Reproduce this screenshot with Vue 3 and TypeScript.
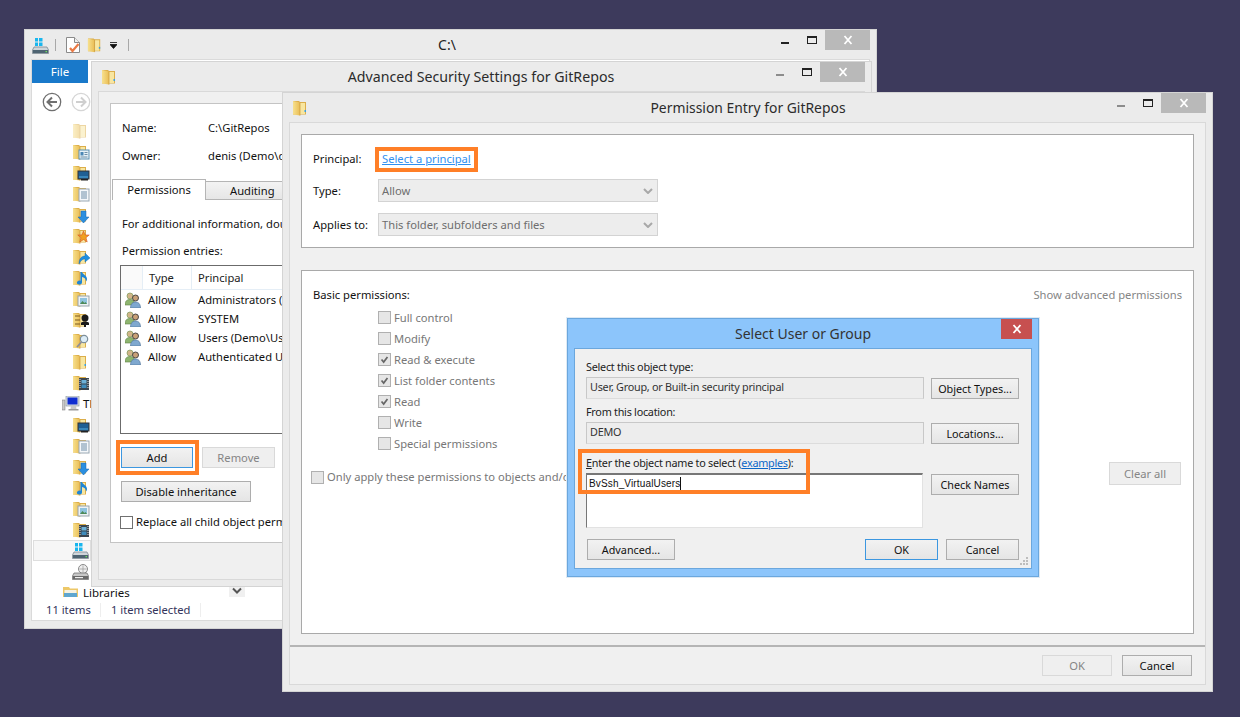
<script setup lang="ts">
const treeRows: { kind: string; label?: string; wide?: boolean; sel?: boolean }[] = [
  { kind: 'folder-pale' }, { kind: 'ov-card' }, { kind: 'ov-desktop' }, { kind: 'ov-doc' }, { kind: 'ov-down' },
  { kind: 'ov-star' }, { kind: 'ov-link' }, { kind: 'ov-music' }, { kind: 'ov-pic' }, { kind: 'ov-black' },
  { kind: 'ov-mag' }, { kind: 'ov-none' }, { kind: 'ov-film' },
  { kind: 'pc', label: 'This PC', wide: true },
  { kind: 'ov-desktop' }, { kind: 'ov-doc' }, { kind: 'ov-down' }, { kind: 'ov-music' }, { kind: 'ov-pic' }, { kind: 'ov-film' },
  { kind: 'drive', sel: true }, { kind: 'disk' },
  { kind: 'lib', label: 'Libraries', wide: true },
]
const entries = [
  ['Allow', 'Administrators (Demo\\Administrators)'],
  ['Allow', 'SYSTEM'],
  ['Allow', 'Users (Demo\\Users)'],
  ['Allow', 'Authenticated Users'],
]
const perms = [
  { t: 'Full control', c: false }, { t: 'Modify', c: false }, { t: 'Read & execute', c: true },
  { t: 'List folder contents', c: true }, { t: 'Read', c: true }, { t: 'Write', c: false }, { t: 'Special permissions', c: false },
]
</script>

<template>
  <div class="desk">
    <svg class="defs" width="0" height="0" aria-hidden="true">
      <defs>
        <linearGradient id="fg" x1="0" y1="0" x2="1" y2="0"><stop offset="0" stop-color="#f7e08e"/><stop offset="1" stop-color="#e9bd55"/></linearGradient>
        <symbol id="folder" viewBox="0 0 18 16">
          <path d="M1 1h6l1 1h6v12.5H1z" fill="#dcae4a"/>
          <path d="M8 3h5v11H8z" fill="#f8e6a0"/>
          <path d="M1 1l7 1.6V15.6L1 14.4z" fill="url(#fg)"/>
          <path d="M8 2.6V15.6" stroke="#c8973a" stroke-width=".7"/>
        </symbol>
        <symbol id="ov-none" viewBox="0 0 18 16"><rect x="12.5" y="10" width="1.5" height="2" fill="#3aa0e0"/></symbol>
        <symbol id="ov-card" viewBox="0 0 18 16"><rect x="7" y="6" width="10" height="9" fill="#e6f1f7" stroke="#5a8fb0"/><rect x="8.5" y="8" width="3" height="3.5" fill="#4a87b5"/><path d="M12.5 8.5h3M12.5 10.5h3M8.5 13h7" stroke="#6d8ea6"/></symbol>
        <symbol id="ov-desktop" viewBox="0 0 18 16"><rect x="6" y="6" width="11" height="8" fill="#1f5f94" stroke="#333"/><path d="M7 12h9" stroke="#55aee0"/><rect x="9" y="14" width="7" height="1.5" fill="#222"/></symbol>
        <symbol id="ov-doc" viewBox="0 0 18 16"><rect x="7" y="3" width="10" height="12" fill="#f4f7fa" stroke="#9aa8b4"/><path d="M9 6h6M9 8h6M9 10h6M9 12h6" stroke="#6f8ea8"/></symbol>
        <symbol id="ov-down" viewBox="0 0 18 16"><path d="M9 4h5v6h3l-5.500 6L6 10h3z" fill="#2b8fe0" stroke="#1a66ad" stroke-width=".5"/></symbol>
        <symbol id="ov-star" viewBox="0 0 18 16"><path d="M11.500 3l1.700 4h4l-3.200 2.700 1.200 4.300-3.700-2.500L7.800 14 9 9.700 5.800 7h4z" fill="#f0a020" stroke="#d4532a" stroke-width=".6"/></symbol>
        <symbol id="ov-link" viewBox="0 0 18 16"><path d="M7 15c0-6 3-8 6-8V4l5 5-5 4v-3c-2 0-4 1-6 5z" fill="#1f8fe0" stroke="#1566aa" stroke-width=".4"/></symbol>
        <symbol id="ov-music" viewBox="0 0 18 16"><path d="M10 2v10.500a2.500 2 0 1 1-1.500-1.800V2zM10 2c1 3 5 3 5 7 0 1-.5 2-1 2.500 0-3-2-4-4-4.500z" fill="#1f86d6"/></symbol>
        <symbol id="ov-pic" viewBox="0 0 18 16"><rect x="6" y="5" width="11" height="10" fill="#eef2f4" stroke="#98a4ac"/><rect x="8" y="7" width="7" height="6" fill="#8fc3de"/><path d="M8 13l2.500-3 2 2 1-1 1.500 2z" fill="#4d8a58"/></symbol>
        <symbol id="ov-black" viewBox="0 0 18 16"><circle cx="13" cy="6" r="3.500" fill="#1a1a1a"/><path d="M9 11c1-2 7-2 8 0v2h-3v2h-2v-2H9z" fill="#1a1a1a"/><path d="M3 4h5M3 8h5M3 12h5" stroke="#7b5a20"/></symbol>
        <symbol id="ov-mag" viewBox="0 0 18 16"><circle cx="12" cy="6" r="3.700" fill="#dcecf6" stroke="#7d8f9c" stroke-width="1.200"/><path d="M9.500 9L5 14" stroke="#8d8d99" stroke-width="1.800"/></symbol>
        <symbol id="ov-film" viewBox="0 0 18 16"><rect x="7" y="3" width="10" height="12" fill="#3b4650"/><rect x="9.500" y="5" width="5" height="3.500" fill="#6cb1d8"/><rect x="9.500" y="9.500" width="5" height="3.500" fill="#3e8cbc"/><path d="M8 4v10M16 4v10" stroke="#ddd" stroke-dasharray="1 1"/></symbol>
        <symbol id="drive" viewBox="0 0 18 16">
          <path d="M3 0h3v3.500H3zM7 0h3.500v3.500H7zM3 4.500h3V8H3zM7 4.500h3.500V8H7z" fill="#19b6ee"/>
          <path d="M2 9h13l1.500 3v3.500H.5V12z" fill="#cfd6da" stroke="#6f7d86" stroke-width=".7"/>
          <rect x="1" y="12" width="15" height="3" fill="#4e6472"/><rect x="13.500" y="13" width="1.500" height="1.200" fill="#6fe05a"/>
        </symbol>
        <symbol id="disk" viewBox="0 0 18 16">
          <circle cx="11" cy="5" r="4.500" fill="#eee" stroke="#8a8a8a"/><path d="M11 1.500V8.500M7.500 5h7" stroke="#9a9a9a" stroke-width=".7"/>
          <path d="M2 9h13l1.500 3v3.500H.5V12z" fill="#c8c8c8" stroke="#666" stroke-width=".7"/>
          <rect x="1" y="12" width="15" height="3" fill="#6a6a6a"/><rect x="3" y="13" width="8" height="1.200" fill="#eee"/>
        </symbol>
        <symbol id="pc" viewBox="0 0 18 16">
          <rect x="0" y="4" width="3" height="10" fill="#c9c9c9" stroke="#777" stroke-width=".5"/>
          <rect x="4" y="0" width="13" height="10" fill="#dde0e2" stroke="#7c8a94" stroke-width=".6"/>
          <rect x="5.500" y="1.500" width="10" height="7" fill="#0f2dd0"/>
          <path d="M9 10h5l.5 3H8.500z" fill="#c8c8c8"/><rect x="6.500" y="13" width="10" height="1.500" fill="#9a9a9a"/>
        </symbol>
        <symbol id="lib" viewBox="0 0 18 16">
          <path d="M1 2h6l1 1.500h8V15H1z" fill="#edc868"/><rect x="2.500" y="5" width="12" height="4" fill="#f6f2e2"/><rect x="2" y="8" width="13" height="7" fill="#5fa6cf"/>
        </symbol>
        <symbol id="users" viewBox="0 0 16 16">
          <circle cx="5" cy="4" r="3" fill="#d2b58a" stroke="#7c9a58" stroke-width=".7"/>
          <path d="M0 13c0-4 2-5.500 5-5.500S10 9 10 13z" fill="#8eb56f" stroke="#5f8245" stroke-width=".6"/>
          <circle cx="10.500" cy="6" r="3" fill="#c9a077" stroke="#3b3b3b" stroke-width=".9"/>
          <path d="M5.500 16c0-4 2-6 5-6s5 2 5 6z" fill="#7fa8cf" stroke="#4c6f95" stroke-width=".6"/>
        </symbol>
        <symbol id="x" viewBox="0 0 12 10"><path d="M2.500 1l7 8M9.500 1l-7 8" stroke="#fff" stroke-width="1.800"/></symbol>
      </defs>
    </svg>

    <!-- Explorer window -->
    <section class="win win-explorer">
      <header class="titlebar">
        <div class="qat">
          <svg class="ic16" viewBox="0 0 18 16"><use href="#drive"/></svg>
          <i class="qsep"></i>
          <svg class="qdoc" viewBox="0 0 14 16"><path d="M.5.5h8l5 5v10H.5z" fill="#fff" stroke="#8a8a8a"/><path d="M8.500.5v5h5" fill="#eee" stroke="#8a8a8a"/><path d="M4 11l2.500 3 6-7" fill="none" stroke="#ea7a45" stroke-width="2.200"/></svg>
          <svg class="qfolder" viewBox="0 0 18 16"><use href="#folder"/><use href="#ov-none"/></svg>
          <svg class="qdrop" viewBox="0 0 7 7"><path d="M0 .5h7M0 2.500h7l-3.500 4z" stroke="#111" fill="#111" stroke-width=".8"/></svg>
          <i class="qsep qsep2"></i>
        </div>
        <div class="title title-ex">C:\</div>
        <div class="controls"><i class="min dark"></i><i class="max"></i><b class="close"><svg viewBox="0 0 12 10"><use href="#x"/></svg></b></div>
      </header>
      <div class="ex-body">
        <div class="ribbon"><span class="file">File</span></div>
        <div class="navrow">
          <svg class="navbtn" viewBox="0 0 20 20"><circle cx="10" cy="10" r="8.700" fill="#fff" stroke="#6f6f6f" stroke-width="1.300"/><path d="M15 10H6M10 5.500L5.500 10l4.500 4.500" fill="none" stroke="#6f6f6f" stroke-width="2"/></svg>
          <svg class="navbtn fwd" viewBox="0 0 20 20"><circle cx="10" cy="10" r="8.700" fill="#fff" stroke="#d5d5d5" stroke-width="1.300"/><path d="M5 10h9M10 5.500l4.500 4.500-4.500 4.500" fill="none" stroke="#cfcfcf" stroke-width="2"/></svg>
        </div>
        <div class="tree">
          <div v-for="(r, i) in treeRows" :key="i" class="tree-row" :class="{ wide: r.wide, sel: r.sel }">
            <svg class="ic-tree" :class="{ pale: r.kind === 'folder-pale' }" viewBox="0 0 18 16">
              <use v-if="r.kind.startsWith('ov-') || r.kind === 'folder-pale'" href="#folder"/>
              <use v-if="r.kind.startsWith('ov-')" :href="'#' + r.kind"/>
              <use v-else-if="r.kind !== 'folder-pale'" :href="'#' + r.kind"/>
            </svg>
            <span v-if="r.label" class="tree-label">{{ r.label }}</span>
          </div>
          <svg class="tree-chev" viewBox="0 0 16 12"><path d="M4 2.500l4 4 4-4" fill="none" stroke="#555" stroke-width="2"/></svg>
        </div>
        <footer class="status"><span class="st-a">11 items</span><span class="st-b">1 item selected</span></footer>
      </div>
    </section>

    <!-- Advanced Security Settings -->
    <section class="win win-adv">
      <header class="titlebar">
        <svg class="ic-title" viewBox="0 0 18 16"><use href="#folder"/><use href="#ov-none"/></svg>
        <div class="title title-adv">Advanced Security Settings for GitRepos</div>
        <div class="controls"><i class="min"></i><i class="max"></i><b class="close"><svg viewBox="0 0 12 10"><use href="#x"/></svg></b></div>
      </header>
      <div class="frame adv-frame">
        <div class="adv-panel">
          <div class="kv"><span>Name:</span><span>C:\GitRepos</span></div>
          <div class="kv"><span>Owner:</span><span>denis (Demo\denis)</span></div>
          <div class="tabs"><span class="tab active">Permissions</span><span class="tab">Auditing</span></div>
          <div class="tab-body">
            <p class="info">For additional information, double-click a permission entry.</p>
            <p class="info entries-label">Permission entries:</p>
            <div class="list">
              <div class="list-head"><span class="lh-i"></span><span class="lh-t">Type</span><span class="lh-p">Principal</span></div>
              <div v-for="e in entries" :key="e[1]" class="list-row">
                <svg class="ic-user" viewBox="0 0 16 16"><use href="#users"/></svg>
                <span class="lr-t">{{ e[0] }}</span><span>{{ e[1] }}</span>
              </div>
            </div>
            <div class="add-row">
              <span class="hl-add"><button class="btn primary b-add">Add</button></span>
              <button class="btn off b-rem">Remove</button>
            </div>
            <button class="btn b-dis">Disable inheritance</button>
            <label class="replace"><i class="cb cb-live"></i>Replace all child object permission entries</label>
          </div>
        </div>
      </div>
    </section>

    <!-- Permission Entry -->
    <section class="win win-perm">
      <header class="titlebar">
        <svg class="ic-title" viewBox="0 0 18 16"><use href="#folder"/><use href="#ov-none"/></svg>
        <div class="title title-perm">Permission Entry for GitRepos</div>
        <div class="controls"><i class="min"></i><i class="max"></i><b class="close"><svg viewBox="0 0 12 10"><use href="#x"/></svg></b></div>
      </header>
      <div class="frame perm-frame">
        <div class="box box-top">
          <span class="b-lab up">Principal:</span>
          <span class="hl-link"><a class="plink">Select a principal</a></span>
          <span class="b-lab">Type:</span>
          <div class="fake-select"><span>Allow</span><svg viewBox="0 0 10 6"><path d="M1 1l4 4 4-4" fill="none" stroke="#a8a8a8" stroke-width="2"/></svg></div>
          <span class="b-lab low">Applies to:</span>
          <div class="fake-select low"><span>This folder, subfolders and files</span><svg viewBox="0 0 10 6"><path d="M1 1l4 4 4-4" fill="none" stroke="#a8a8a8" stroke-width="2"/></svg></div>
        </div>
        <div class="box box-main">
          <div class="main-head"><span>Basic permissions:</span><span class="show-adv">Show advanced permissions</span></div>
          <div class="perm-list">
            <div v-for="p in perms" :key="p.t" class="perm-row">
              <i class="cb"><svg v-if="p.c" viewBox="0 0 13 13"><path d="M3 6.500l2.500 3L10 3.500" fill="none" stroke="#666" stroke-width="2"/></svg></i>
              <span>{{ p.t }}</span>
            </div>
          </div>
          <div class="only-row">
            <div class="only"><i class="cb"></i><span>Only apply these permissions to objects and/or containers within this container</span></div>
            <button class="btn off b-clear">Clear all</button>
          </div>
        </div>
        <footer class="perm-foot">
          <button class="btn off b-foot">OK</button>
          <button class="btn b-foot">Cancel</button>
        </footer>
      </div>
    </section>

    <!-- Select User or Group -->
    <section class="win dlg">
      <header class="dlg-title">
        <span>Select User or Group</span>
        <b class="dlg-close"><svg viewBox="0 0 12 10"><use href="#x"/></svg></b>
      </header>
      <div class="dlg-body">
        <div class="dlg-line first">Select this object type:</div>
        <div class="dlg-pair gap3"><div class="field">User, Group, or Built-in security principal</div><button class="btn dbtn">Object Types...</button></div>
        <div class="dlg-line">From this location:</div>
        <div class="dlg-pair gap3"><div class="field">DEMO</div><button class="btn dbtn">Locations...</button></div>
        <div class="dlg-line third"><u>E</u>nter the object name to select (<a class="ex">examples</a>):</div>
        <div class="dlg-pair gap3 tall"><div class="area"><span class="typed">BvSsh_VirtualUsers</span><i class="caret"></i></div><button class="btn dbtn">Check Names</button></div>
        <div class="dlg-foot">
          <button class="btn dbtn">Advanced...</button>
          <div class="dlg-foot-r"><button class="btn dbtn primary d-ok">OK</button><button class="btn dbtn d-ok">Cancel</button></div>
        </div>
        <svg class="grip" viewBox="0 0 9 9"><path d="M6 0h2v2H6zM3 3h2v2H3zM6 3h2v2H6zM0 6h2v2H0zM3 6h2v2H3zM6 6h2v2H6z" fill="#bdbdbd"/></svg>
      </div>
      <div class="hl-enter"></div>
    </section>
  </div>
</template>

<style>
html, body { margin: 0; padding: 0; background: #3d3a5c; }
</style>

<style scoped>
.desk { position: relative; width: 1240px; height: 717px; overflow: hidden; background: #3d3a5c; font: 11.2px/18px "Noto Sans", "Open Sans", sans-serif; color: #111; }
.defs { position: absolute; }
.win { position: absolute; box-sizing: border-box; display: flex; flex-direction: column; background: #ebebeb; border: 1px solid #d4d4d4; }
.win-explorer { left: 24px; top: 29px; width: 853px; height: 600px; }
.win-adv { left: 91px; top: 61px; width: 781px; height: 526px; }
.win-perm { left: 282px; top: 92px; width: 931px; height: 600px; }
.dlg { left: 567px; top: 318px; width: 472px; height: 259px; background: #8cc5fb; border-color: #6ba7dd; box-shadow: 0 0 0 1px #dfeaf4; }

.titlebar { flex: none; height: 29px; display: grid; grid-template-columns: 1fr auto 1fr; align-items: start; padding: 0 6px 0 9px; box-sizing: content-box; }
.title { font-size: 14px; line-height: 30px; color: #2b2b2b; white-space: nowrap; }
.title-adv { font-size: 14.2px; margin-right: 4px; }
.title-perm { font-size: 13.9px; margin-right: 2px; }
.title-ex { color: #222; margin-right: 10px; }
.ic-title { width: 18px; height: 16px; margin-top: 7px; }
.controls { justify-self: end; display: flex; align-items: flex-start; }
.min { width: 8px; height: 2px; margin: 12px 18px 0 0; background: #8c8c8c; }
.min.dark { background: #222; }
.max { box-sizing: border-box; width: 10px; height: 8px; margin: 6px 8px 0 0; border: 1px solid #222; border-top-width: 2px; }
.close { width: 45px; height: 20px; background: #b9b9b9; display: flex; align-items: center; justify-content: center; }
.close svg { width: 12px; height: 10px; }

.qat { display: flex; align-items: center; height: 30px; margin-left: -2px; }
.ic16 { width: 18px; height: 16px; margin-top: 1px; }
.qsep { width: 1px; height: 12px; background: #a8a8a8; margin: 0 10px 0 5px; }
.qsep2 { margin: 0 0 0 11px; }
.qdoc { width: 14px; height: 16px; }
.qfolder { width: 17px; height: 16px; margin-left: 7px; }
.qdrop { width: 7px; height: 7px; margin-left: 6px; }

.ex-body { flex: 1; min-height: 0; margin: 0 6px 7px 6px; background: #fff; border: 1px solid #dadada; display: flex; flex-direction: column; }
.ribbon { flex: none; height: 23px; }
.file { display: block; width: 56px; height: 23px; line-height: 23px; text-align: center; background: #1979ca; color: #fff; font-size: 11.5px; }
.navrow { flex: none; height: 37px; display: flex; align-items: center; gap: 9px; padding-left: 10px; box-sizing: border-box; }
.navbtn { width: 20px; height: 20px; }
.tree { flex: 1; min-height: 0; overflow: hidden; position: relative; }
.tree-row { height: 21px; display: flex; align-items: center; padding-left: 40px; box-sizing: border-box; width: 100%; }
.tree-row.wide { padding-left: 30px; }
.tree-row.sel { margin-left: 1px; width: 58px; padding-left: 39px; background: #f6f6f6; outline: 1px solid #dedede; outline-offset: -1px; }
.ic-tree { width: 18px; height: 16px; flex: none; }
.ic-tree.pale { opacity: .5; }
.tree-label { margin-left: 3px; font-size: 11.5px; padding-top: 1px; }
.tree-chev { position: absolute; left: 197px; top: 466px; width: 16px; height: 12px; background: #f0f0f0; }
.status { flex: none; height: 23px; display: flex; align-items: center; color: #33335a; padding-top: 3px; box-sizing: border-box; }
.st-a { width: 69px; padding-left: 14px; box-sizing: border-box; border-right: 1px solid #eee; line-height: 14px; }
.st-b { width: 100px; padding-left: 10px; box-sizing: border-box; border-right: 1px solid #eee; line-height: 14px; white-space: nowrap; }

.frame { flex: 1; min-height: 0; margin: 0 6px 6px 6px; background: #f0f0f0; border: 1px solid #d9d9d9; box-sizing: border-box; }
.adv-frame { padding: 11px 11px 37px; }
.adv-panel { box-sizing: border-box; height: 440px; background: #fff; border: 1px solid #c4c4c4; padding: 10px 11px 0; }
.kv { display: grid; grid-template-columns: 86px 1fr; height: 28px; align-items: center; white-space: nowrap; }
.tabs { margin: 9px 0 0 -10px; display: flex; align-items: flex-end; height: 21px; }
.tab { box-sizing: border-box; height: 19px; line-height: 18px; border: 1px solid #b5b5b5; border-left: 0; background: linear-gradient(#f3f3f3, #e6e6e6); padding: 0 24px; }
.tab.active { height: 21px; width: 94px; padding: 0; text-align: center; background: #fff; border: 1px solid #b5b5b5; border-bottom: 0; line-height: 20px; }
.tab-body { display: flex; flex-direction: column; align-items: flex-start; }
.info { margin: 15px 0 0; white-space: nowrap; line-height: 18px; }
.entries-label { margin-top: 9px; }
.list { box-sizing: border-box; margin: 5px 0 0 -2px; width: 600px; height: 169px; border: 1px solid #6b6b6b; }
.list-head { height: 23px; display: flex; border-bottom: 1px solid #e5eef6; line-height: 23px; color: #222; }
.lh-i { width: 21px; border-right: 1px solid #e5eef6; background: #fafafa; }
.lh-t { width: 49px; padding-left: 6px; box-sizing: border-box; border-right: 1px solid #e5eef6; }
.lh-p { padding-left: 6px; }
.list-row { height: 19px; display: flex; align-items: center; white-space: nowrap; }
.ic-user { width: 16px; height: 16px; margin-left: 4px; flex: none; }
.lr-t { width: 50px; margin-left: 7px; flex: none; }
.add-row { display: flex; align-items: center; margin: 6px 0 0 -6px; gap: 3px; }
.hl-add { display: block; border: 4px solid #ff7f27; padding: 3px 2px 3px 1px; line-height: 0; }
.btn { box-sizing: border-box; height: 21px; padding: 0; border: 1px solid #adadad; background: linear-gradient(#f2f2f2, #e5e5e5); font: inherit; line-height: 18px; color: #111; text-align: center; white-space: nowrap; }
.btn.primary { border-color: #3c97e0; }
.btn.off { background: #efefef; border-color: #d9d9d9; color: #858585; }
.b-add { width: 72px; }
.b-rem { width: 73px; }
.b-dis { width: 130px; margin: 6px 0 0 -1px; }
.replace { display: flex; align-items: center; margin: 11px 0 0 -2px; height: 18px; white-space: nowrap; gap: 3px; }
.cb { box-sizing: border-box; flex: none; width: 13px; height: 13px; border: 1px solid #b0b0b0; background: #e6e6e6; display: block; }
.cb svg { display: block; width: 11px; height: 11px; }
.cb-live { background: #fff; border-color: #707070; }

.perm-frame { padding: 11px 11px 0; display: flex; flex-direction: column; }
.box { box-sizing: border-box; background: #fff; border: 1px solid #a9a9a9; }
.box-top { height: 114px; padding: 12px 11px 0; display: grid; grid-template-columns: 65px 280px; grid-template-rows: 25px 23px 27px; row-gap: 7px; align-items: center; justify-content: start; }
.low { align-self: end; }
span.low { line-height: 23px; }
.up { padding-bottom: 2px; }
.hl-link { box-sizing: border-box; justify-self: start; width: 103px; height: 25px; margin-left: -3px; border: 4px solid #ff7f27; padding-left: 3px; line-height: 15px; white-space: nowrap; }
.plink { color: #2f8ff0; text-decoration: underline; }
.fake-select { box-sizing: border-box; height: 23px; display: flex; align-items: center; justify-content: space-between; padding: 0 4px 0 3px; background: #ededed; border: 1px solid #d3d3d3; color: #6e6e6e; }
.fake-select svg { width: 10px; height: 6px; }
.box-main { margin-top: 22px; height: 364px; padding: 15px 11px 0; }
.main-head { display: flex; justify-content: space-between; }
.show-adv { color: #858585; }
.perm-list { margin: 3px 0 0 65px; }
.perm-row { height: 21px; display: flex; align-items: center; gap: 3px; color: #777; }
.perm-row span { padding-top: 1px; }
.only-row { display: flex; justify-content: space-between; align-items: flex-start; margin-top: 8px; }
.only { display: flex; align-items: center; gap: 3px; margin: 6px 0 0 -2px; color: #777; white-space: nowrap; }
.b-clear { width: 72px; height: 23px; margin-right: 1px; }
.perm-foot { flex: 1; margin: 11px -11px 0; border-top: 2px solid #b5b5b5; display: flex; justify-content: flex-end; gap: 10px; padding: 8px 13px 0 0; }
.b-foot { width: 70px; }

.dlg-title { flex: none; height: 29px; text-align: center; font-size: 14px; line-height: 30px; color: #333; position: relative; }
.dlg-close { position: absolute; right: 6px; top: 0; width: 31px; height: 20px; background: #c75050; display: flex; align-items: center; justify-content: center; }
.dlg-close svg { width: 12px; height: 10px; }
.dlg-body { position: relative; flex: 1; min-height: 0; margin: 0 6px 7px 6px; background: #f0f0f0; border: 1px solid #6ba7dd; padding: 0 11px; font: 10.8px/14px "Noto Sans", sans-serif; letter-spacing: -.25px; color: #222; }
.dlg-line { margin-top: 6px; height: 14px; white-space: nowrap; }
.dlg-line.first { margin-top: 11px; }
.dlg-line.third { margin-top: 12px; }
.dlg-pair { display: grid; grid-template-columns: 338px 88px; column-gap: 7px; align-items: start; width: 433px; }
.gap3 { margin-top: 3px; }
.field { box-sizing: border-box; height: 22px; background: #ededed; border: 1px solid #c8c8c8; border-bottom-color: #dcdcdc; padding: 0 3px; line-height: 18px; color: #333; }
.dlg-pair .dbtn { margin-top: 1px; }
.dbtn { height: 21px; line-height: 18px; }
.area { box-sizing: border-box; height: 55px; width: 337px; background: #fff; border: 1px solid #e2e2e2; border-top: 2px solid #777; border-left: 1px solid #777; padding: 1px 2px; display: flex; align-items: flex-start; }
.typed { font: 10px/16px "Liberation Sans", sans-serif; letter-spacing: .15px; color: #111; white-space: nowrap; }
.caret { width: 1px; height: 14px; background: #111; margin-top: 1px; }
.dlg-foot { display: flex; justify-content: space-between; margin: 11px 0 0 1px; width: 432px; }
.dlg-foot .dbtn { width: 88px; }
.dlg-foot-r { display: flex; gap: 8px; }
.dlg-foot .d-ok { width: 73px; }
.grip { position: absolute; right: 2px; bottom: 2px; width: 9px; height: 9px; }
.hl-enter { position: absolute; left: 10px; top: 130px; width: 232px; height: 45px; box-sizing: border-box; border: 4px solid #ff7f27; pointer-events: none; }
.ex { color: #0a66c8; text-decoration: underline; }
</style>
